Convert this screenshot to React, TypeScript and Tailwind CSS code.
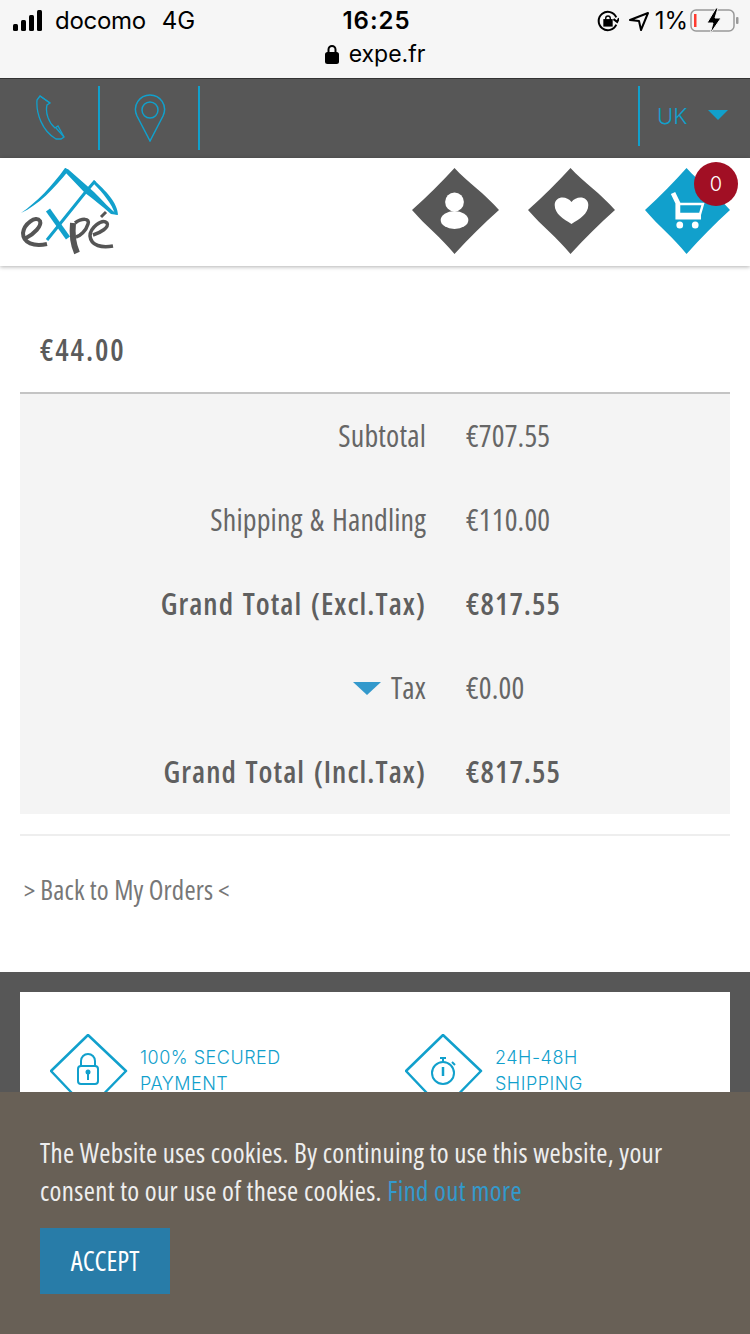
const BLUE = "#11a0cc";

function Signal() {
  return (
    <svg width="34" height="22" viewBox="0 0 34 22" className="block shrink-0">
      <rect x="0" y="14" width="5" height="7" rx="1.5" fill="#000" />
      <rect x="8" y="10" width="5" height="11" rx="1.5" fill="#000" />
      <rect x="16" y="5" width="5" height="16" rx="1.5" fill="#000" />
      <rect x="24" y="0" width="5" height="21" rx="1.5" fill="#000" />
    </svg>
  );
}

function Battery() {
  return (
    <svg width="50" height="26" viewBox="0 0 50 26" className="-ml-[4px]">
      <rect x="1" y="2" width="43" height="21" rx="5" fill="none" stroke="#999" strokeWidth="1.5" />
      <rect x="4" y="6" width="2.5" height="13" fill="#ff3b30" />
      <rect x="46" y="9" width="2.5" height="7" rx="1" fill="#999" />
      <path d="M26 0 L17 15 H23 L20 26 L31 10 H25 L28 0 Z" fill="#000" stroke="#f6f6f6" strokeWidth="1" />
    </svg>
  );
}

function Diamond({ color, width, className, children }: { color: string; width: number; className?: string; children: React.ReactNode }) {
  return (
    <svg width={width} height="86" viewBox="0 0 88 86" preserveAspectRatio="none" className={className}>
      <path d="M43 0 C56 14 74 26 88 42 C72 56 58 70 43 86 C30 70 14 58 0 42 C16 28 30 14 43 0 Z" fill={color} />
      {children}
    </svg>
  );
}

function Logo() {
  return (
    <svg width="100" height="88" viewBox="0 0 100 88">
      {/* mountain */}
      <path d="M1 45 C17 34 32 18 45 0 L49 2 C34 21 18 37 1 45 Z" fill={BLUE} />
      <path d="M45 0 L49 2 L74 24 C83 33 90 41 98 47 L91 46 C82 38 72 30 65 25 L45 4 Z" fill={BLUE} />
      <path d="M27 72 L64 26 L75 13" fill="none" stroke={BLUE} strokeWidth="3" />
      <path d="M74 12 C85 22 98 35 98 47 L95 46 C92 36 83 25 74 16 Z" fill={BLUE} />
      <path d="M28 42 L48 70" fill="none" stroke={BLUE} strokeWidth="5" />
      {/* letters */}
      <path d="M6 70 C14 66 22 58 20 53 C16 47 4 56 3 65 C3 75 14 79 27 76" fill="none" stroke="#555" strokeWidth="4" />
      <path d="M53 55 C52 65 53 76 57 85" fill="none" stroke="#555" strokeWidth="6" />
      <path d="M55 55 C62 50 70 50 68 56 C66 63 60 68 56 69" fill="none" stroke="#555" strokeWidth="3.5" />
      <path d="M73 67 C80 65 90 59 87 55 C82 50 70 60 70 68 C71 78 82 80 93 78" fill="none" stroke="#555" strokeWidth="3.5" />
      <path d="M81 49 L86 44" fill="none" stroke="#555" strokeWidth="3" />
    </svg>
  );
}

function BadgeOutline({ children }: { children: React.ReactNode }) {
  return (
    <svg width="78" height="78" viewBox="0 0 78 78" className="shrink-0">
      <path d="M38 1 L76 37 L38 76 L1 37 Z" fill="none" stroke={BLUE} strokeWidth="2.5" strokeLinejoin="round" />
      {children}
    </svg>
  );
}

function TotalRow({ label, value, bold, tax }: { label: string; value: string; bold?: boolean; tax?: boolean }) {
  return (
    <div className={`flex h-[84px] items-center pb-[2px] text-[30px] [word-spacing:2px] ${bold ? "font-semibold tracking-[1.05px] text-[#5f5f5f]" : "tracking-[0.15px] text-[#666]"}`}>
      <div className="flex w-[406px] items-center justify-end gap-[10px]">
        {tax && <span className="mt-[2px] h-0 w-0 border-x-[14px] border-t-[13px] border-x-transparent border-t-[#3399cc]" />}
        <span>{label}</span>
      </div>
      <div className="ml-[40px]">{value}</div>
    </div>
  );
}

export default function App() {
  return (
    <div className="relative h-[1334px] w-[750px] overflow-hidden bg-white font-['Liberation_Sans',sans-serif]">
      {/* status bar + url */}
      <div className="h-[78px] bg-[#f6f6f6] text-black">
        <div className="flex h-[42px] items-center justify-between pl-[13px] pr-[10px] font-['Inter',sans-serif] text-[24px]">
          <div className="flex w-[240px] items-center">
            <Signal />
            <span className="ml-[8px] tracking-[-0.3px]">docomo</span>
            <span className="ml-[16px]">4G</span>
          </div>
          <div className="font-semibold tracking-[1px]">16:25</div>
          <div className="flex w-[240px] items-center justify-end gap-[6px]">
            <svg width="22" height="22" viewBox="0 0 24 24" fill="none" stroke="#000" strokeWidth="2.2">
              <path d="M21 16 A10 10 0 1 1 21 8" />
              <path d="M18 10 L22 13 L24 9" />
              <rect x="8" y="11" width="8" height="6" fill="#000" />
              <path d="M9.500 11 V9 a2.500 2.500 0 0 1 5 0 V11" strokeWidth="1.500" />
            </svg>
            <svg width="20" height="20" viewBox="0 0 20 20" fill="none" stroke="#000" strokeWidth="2" className="ml-[4px]">
              <path d="M1 9 L19 2 L12 19 L10 10 Z" strokeLinejoin="round" />
            </svg>
            <span>1%</span>
            <Battery />
          </div>
        </div>
        <div className="flex h-[24px] items-center justify-center gap-[10px] font-['Inter',sans-serif] text-[23px] leading-[24px]">
          <svg width="14" height="20" viewBox="0 0 14 20">
            <rect x="0" y="8" width="14" height="12" rx="2.500" fill="#000" />
            <path d="M3.500 9 V5.500 a3.500 3.500 0 0 1 7 0 V9" fill="none" stroke="#000" strokeWidth="2" />
          </svg>
          <span>expe.fr</span>
        </div>
      </div>

      {/* top bar */}
      <div className="flex h-[80px] items-start border-t border-[#333] bg-[#575757]">
        <div className="mt-[7px] flex h-[64px] w-[100px] items-center justify-center border-r-2 border-[#11a0cc]">
          <svg width="32" height="46" viewBox="0 0 32 46" fill="none" stroke={BLUE} strokeWidth="1.300" className="ml-[6px]">
            <path d="M4 1 L1 5 C0 18 6 36 20 44 L25 44 L28 42 L22 31 L19 33 C13 28 9 18 11 10 L14 8 Z" />
            <path d="M4 1 L14 8 M20 33 L28 42" />
          </svg>
        </div>
        <div className="mt-[7px] flex h-[64px] w-[100px] items-center justify-center border-r-2 border-[#11a0cc]">
          <svg width="32" height="48" viewBox="0 0 32 48" fill="none" stroke={BLUE} strokeWidth="1.500" className="ml-[2px]">
            <path d="M16 47 L3 22 C-2 11 6 1 16 1 C26 1 34 11 29 22 Z" />
            <circle cx="16" cy="16" r="8" />
          </svg>
        </div>
        <div className="ml-auto mt-[7px] flex h-[60px] w-[112px] items-center border-l-2 border-[#11a0cc] pl-[17px]">
          <span className="font-['Inter',sans-serif] text-[22px] font-light text-[#11a0cc]">UK</span>
          <span className="mb-[2px] ml-[21px] h-0 w-0 border-x-[10px] border-t-[10px] border-x-transparent border-t-[#11a0cc]" />
        </div>
      </div>

      {/* header */}
      <div className="relative flex h-[108px] items-center bg-white pl-[20px] shadow-[0_1px_4px_rgba(0,0,0,0.3)]">
        <Logo />
        <div className="ml-auto flex items-center gap-[29px] pb-[2px] pr-[20px]">
          <Diamond color="#575757" width={87}>
            <circle cx="43" cy="34" r="9.500" fill="#fff" />
            <ellipse cx="43" cy="52" rx="14" ry="9" fill="#fff" />
          </Diamond>
          <Diamond color="#575757" width={87}>
            <path d="M44 56 C36 51 27 46 27 37 C27 28 39 27 44 34 C49 27 61 28 61 37 C61 46 52 51 44 56 Z" fill="#fff" />
          </Diamond>
          <Diamond color="#11a0cc" width={85} className="ml-[1px]">
            <path d="M29 25 L34 35 V49 H58" fill="none" stroke="#fff" strokeWidth="5" />
            <path d="M34 36 H60 L57 46 H34 Z" fill="none" stroke="#fff" strokeWidth="2.500" />
            <circle cx="36" cy="57" r="3.500" fill="#fff" />
            <circle cx="52" cy="57" r="3.500" fill="#fff" />
          </Diamond>
        </div>
        <div className="absolute right-[12px] top-[4px] flex h-[44px] w-[44px] items-center justify-center rounded-full bg-[#a10f24] font-['Inter',sans-serif] text-[20px] font-light text-white">
          0
        </div>
      </div>

      {/* order totals */}
      <div className="px-[20px] font-['Open_Sans',sans-serif] [font-stretch:75%]">
        <div className="flex h-[128px] items-end border-b-2 border-[#c4c4c4] pb-[20px] pl-[20px] text-[30px] font-semibold tracking-[1.9px] text-[#5b5b5b]">
          €44.00
        </div>
        <div className="bg-[#f4f4f4]">
          <TotalRow label="Subtotal" value="€707.55" />
          <TotalRow label="Shipping & Handling" value="€110.00" />
          <TotalRow label="Grand Total (Excl.Tax)" value="€817.55" bold />
          <TotalRow label="Tax" value="€0.00" tax />
          <TotalRow label="Grand Total (Incl.Tax)" value="€817.55" bold />
        </div>
        <div className="mt-[20px] h-[2px] bg-[#eee]" />
        <div className="mt-[34px] flex h-[40px] items-center pl-[4px] text-[27px] tracking-[0.18px] text-[#777]">
          <span className="text-[26px]">&gt;</span>
          <span className="mx-[5px]">Back to My Orders</span>
          <span className="text-[26px]">&lt;</span>
        </div>
      </div>

      {/* footer peeking out behind the cookie bar */}
      <div className="mt-[62px] h-[400px] bg-[#575757] px-[20px] pt-[20px]">
        <div className="grid h-[300px] grid-cols-2 bg-white pl-[30px] pt-[42px] font-['Inter',sans-serif] text-[18px] font-light leading-[26px] tracking-[0.5px] text-[#11a0cc]">
          <div className="flex items-start gap-[12px]">
            <BadgeOutline>
              <rect x="28" y="32" width="20" height="18" rx="3" fill="none" stroke={BLUE} strokeWidth="2" />
              <path d="M31 32 V27 a7 7 0 0 1 14 0 V32" fill="none" stroke={BLUE} strokeWidth="2" />
              <circle cx="38" cy="38" r="2.500" fill={BLUE} />
              <rect x="37" y="38" width="2" height="8" fill={BLUE} />
            </BadgeOutline>
            <div className="pt-[11px]">100% SECURED<br />PAYMENT</div>
          </div>
          <div className="flex items-start gap-[12px] pl-[15px]">
            <BadgeOutline>
              <circle cx="38" cy="39" r="11" fill="none" stroke={BLUE} strokeWidth="2" />
              <path d="M35 24 H41 M38 24 V28 M47 28 L50 31" stroke={BLUE} strokeWidth="2" />
              <path d="M38 33 V42" stroke={BLUE} strokeWidth="2.500" />
            </BadgeOutline>
            <div className="pt-[11px]">24H-48H<br />SHIPPING</div>
          </div>
        </div>
      </div>

      {/* cookie notice */}
      <div className="absolute bottom-0 left-0 h-[242px] w-full bg-[#686056] px-[40px] pt-[42px] font-['Open_Sans',sans-serif] text-[27px] leading-[38px] tracking-[0.32px] text-[#eee] [font-stretch:75%]">
        <p>
          The Website uses cookies. By continuing to use this website, your consent to our use of these cookies.{" "}
          <span className="text-[#3399cc]">Find out more</span>
        </p>
        <button className="mt-[18px] h-[66px] w-[130px] bg-[#287ca8] text-[27px] tracking-normal text-white [font-stretch:75%]">ACCEPT</button>
      </div>
    </div>
  );
}
